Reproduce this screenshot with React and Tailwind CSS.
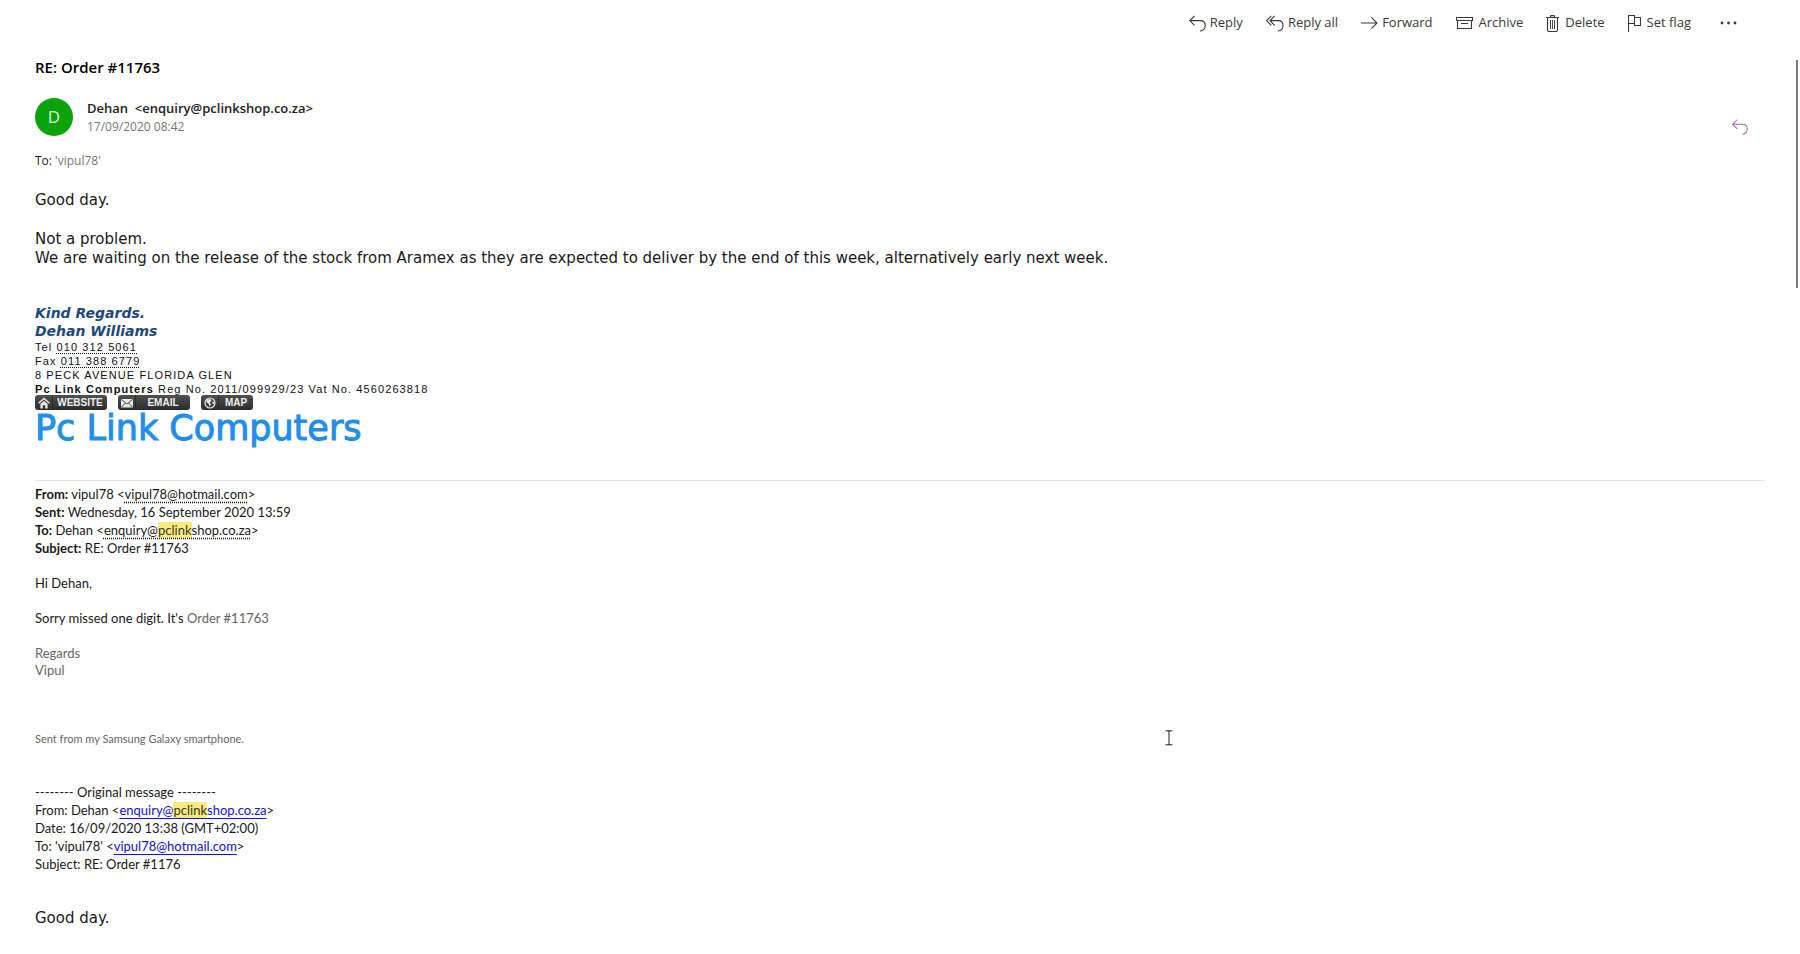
import React from 'react';

const SEGOE = "font-['Open_Sans','Noto_Sans',sans-serif]";
const CALIBRI = "font-['Lato','Open_Sans',sans-serif]";
const VERDANA = "font-['DejaVu_Sans',sans-serif]";
const ARIAL = "font-['Liberation_Sans',sans-serif]";

const ReplyIcon = ({ className = 'w-[17px] h-[17px]' }) => (
  <svg viewBox="0 0 17 17" className={className} fill="none" stroke="currentColor" strokeWidth="1.1">
    <path d="M5.5 .8 .8 5.6l4.7 4.8M.8 5.6h10.4c3.2 0 5 2.2 5 5s-2 5.2-5.2 5.4" />
  </svg>
);

const ReplyAllIcon = () => (
  <svg viewBox="0 0 18 17" className="w-[18px] h-[17px]" fill="none" stroke="currentColor" strokeWidth="1.1">
    <path d="M5.2 .8.6 5.6l4.6 4.8M8.6 .8 4 5.6l4.6 4.8M4 5.6h8c3.2 0 5 2.2 5 5s-2 5.2-5.2 5.4" />
  </svg>
);

const ForwardIcon = () => (
  <svg viewBox="0 0 17 17" className="w-[17px] h-[17px]" fill="none" stroke="currentColor" strokeWidth="1.1">
    <path d="M0 8h16M10.4 2.4 16 8l-5.6 5.6" />
  </svg>
);

const ArchiveIcon = () => (
  <svg viewBox="0 0 17 17" className="w-[17px] h-[17px]" fill="none" stroke="currentColor" strokeWidth="1.1">
    <path d="M.5 2.5h16v3H.5zM1.5 5.5v8h14v-8M5 8.5h7" />
  </svg>
);

const DeleteIcon = () => (
  <svg viewBox="0 0 13 17" className="w-[13px] h-[17px]" fill="none" stroke="currentColor" strokeWidth="1.1">
    <path d="M0 2.5h13M4.5 2.5V1.4c0-.5.3-.8.8-.8h2.4c.5 0 .8.3.8.8v1.1M1.5 2.5v12.6c0 .9.4 1.4 1.2 1.4h7.6c.8 0 1.2-.5 1.2-1.4V2.5" />
    <path d="M4.5 5v9M6.5 5v9M8.5 5v9" strokeWidth=".9" />
  </svg>
);

const FlagIcon = () => (
  <svg viewBox="0 0 13 17" className="w-[13px] h-[17px]" fill="none" stroke="currentColor" strokeWidth="1.1">
    <path d="M.5 17V.5h6v8h-6M6.5 2.5h6v8h-6v-2" />
  </svg>
);

const ACTIONS = [
  { label: 'Reply', Icon: ReplyIcon, gap: 'gap-1' },
  { label: 'Reply all', Icon: ReplyAllIcon, gap: 'gap-1' },
  { label: 'Forward', Icon: ForwardIcon, gap: 'gap-1' },
  { label: 'Archive', Icon: ArchiveIcon, gap: 'gap-[6px]' },
  { label: 'Delete', Icon: DeleteIcon, gap: 'gap-[6px]' },
  { label: 'Set flag', Icon: FlagIcon, gap: 'gap-[6px]' },
];

function Toolbar() {
  return (
    <header className="flex h-[46px] items-center justify-end gap-[23px] pr-[63px] text-[13px] text-[#3a3a3a]">
      {ACTIONS.map(({ label, Icon, gap }) => (
        <button key={label} className={`flex items-center ${gap}`}>
          <Icon />
          <span>{label}</span>
        </button>
      ))}
      <button aria-label="More actions" className="ml-[6px] flex items-center">
        <svg viewBox="0 0 17 4" className="w-[17px] h-1" fill="currentColor">
          <circle cx="2" cy="2" r="1.4" />
          <circle cx="8.5" cy="2" r="1.4" />
          <circle cx="15" cy="2" r="1.4" />
        </svg>
      </button>
    </header>
  );
}

const HomeGlyph = () => (
  <svg viewBox="0 0 12 12" className="w-3 h-3" fill="none" stroke="#e8e8e8" strokeWidth="1.5">
    <path d="M.6 6.2 6 1.4l5.4 4.8" />
    <path d="M2.4 7 6 3.9 9.6 7v4.4H7.2V8.2H4.8v3.2H2.4z" fill="#e8e8e8" stroke="none" />
  </svg>
);

const MailGlyph = () => (
  <svg viewBox="0 0 12 12" className="w-3 h-3" stroke="#3a3a3a" strokeWidth=".9">
    <rect x="0" y="2" width="12" height="8.5" fill="#e8e8e8" stroke="none" />
    <path d="M.4 2.4 6 7l5.6-4.6M.4 10.2 4.4 6M11.6 10.2 7.6 6" fill="none" />
  </svg>
);

const GlobeGlyph = () => (
  <svg viewBox="0 0 12 12" className="w-3 h-3">
    <circle cx="6" cy="6" r="5" fill="none" stroke="#e8e8e8" strokeWidth="1.2" />
    <path d="M3 2.6 6.6 2l.8 1.8-1.6 1.6L7 7.2 5.6 9.8 4.4 6.6 2.4 5.4zM8.6 4.4l1.6.8-.4 2.4-1.4-.8z" fill="#e8e8e8" />
  </svg>
);

const BADGES = [
  { label: 'WEBSITE', Glyph: HomeGlyph, size: 'w-[72px]' },
  { label: 'EMAIL', Glyph: MailGlyph, size: 'w-[72px]' },
  { label: 'MAP', Glyph: GlobeGlyph, size: 'w-[52px]' },
];

function Signature() {
  return (
    <div>
      <div className={`${VERDANA} pt-9 text-[14px] font-bold italic leading-[18px] text-[#1f497d]`}>
        <p>Kind Regards.</p>
        <p>Dehan Williams</p>
      </div>
      <div className={`${ARIAL} text-[11px] leading-[14px] tracking-widest text-[#111]`}>
        <p>Tel <a href="tel:0103125061" className="underline decoration-dotted underline-offset-2">010 312 5061</a></p>
        <p>Fax <a href="tel:0113886779" className="underline decoration-dotted underline-offset-2">011 388 6779</a></p>
        <p>8 PECK AVENUE FLORIDA GLEN</p>
        <p><b>Pc Link Computers</b> Reg No. 2011/099929/23 Vat No. 4560263818</p>
      </div>
      <div className={`${ARIAL} -mt-px mb-px flex gap-[11px] text-[10px] font-bold leading-[15px] text-[#eee]`}>
        {BADGES.map(({ label, Glyph, size }) => (
          <a key={label} href="#" className={`flex h-[15px] ${size} items-center rounded-[3px] bg-linear-to-b from-[#505050] to-[#2c2c2c] pl-[3px]`}>
            <Glyph />
            <span className="ml-[2px] flex-1 border-l border-[#2a2a2a] text-center">{label}</span>
          </a>
        ))}
      </div>
      <p className={`${VERDANA} text-[35px] leading-[35px] text-[#1e8fee] [-webkit-text-stroke:1px_#1e8fee]`}>Pc Link Computers</p>
    </div>
  );
}

const Mark = ({ children }) => <mark className="bg-[#fbe983] text-[#3a3a1a]">{children}</mark>;

const dotted = 'underline decoration-dotted underline-offset-[3px]';
const link = 'text-[#1212d8] underline underline-offset-[3px]';

function QuotedMessage() {
  return (
    <section className={`${CALIBRI} mt-[34px] border-t border-[#e3e3e3] pt-1 text-[13px] leading-[18px] text-[#1a1a1a]`}>
      <p><b>From:</b> vipul78 &lt;<a href="#" className={dotted}>vipul78@hotmail.com</a>&gt;</p>
      <p><b>Sent:</b> Wednesday, 16 September 2020 13:59</p>
      <p><b>To:</b> Dehan &lt;<a href="#" className={dotted}>enquiry@<Mark>pclink</Mark>shop.co.za</a>&gt;</p>
      <p><b>Subject:</b> RE: Order #11763</p>
      <p className="mt-[17px]">Hi Dehan,</p>
      <p className="mt-[17px]">Sorry missed one digit. It's <span className="text-[#666]">Order #11763</span></p>
      <p className="mt-[18px] leading-[17px] text-[#666]">Regards<br />Vipul</p>
      <p className="mt-[51px] text-[11px] text-[#666]">Sent from my Samsung Galaxy smartphone.</p>
      <div className="mt-[35px]">
        <p>-------- Original message --------</p>
        <p>From: Dehan &lt;<a href="#" className={link}>enquiry@<Mark>pclink</Mark>shop.co.za</a>&gt;</p>
        <p>Date: 16/09/2020 13:38 (GMT+02:00)</p>
        <p>To: 'vipul78' &lt;<a href="#" className={link}>vipul78@hotmail.com</a>&gt;</p>
        <p>Subject: RE: Order #1176</p>
      </div>
      <p className={`${VERDANA} mt-9 text-[15px]`}>Good day.</p>
    </section>
  );
}

export default function App() {
  return (
    <div className={`${SEGOE} relative min-h-screen bg-white text-[#1a1a1a]`}>
      <Toolbar />
      <main className="px-[35px] pt-[9px]">
        <h1 className="text-[15px] font-semibold leading-6 text-black">RE: Order #11763</h1>
        <div className="mt-[19px] flex items-center">
          <div className="flex h-[38px] w-[38px] items-center justify-center rounded-full bg-[#0aa30a] text-[17px] text-[#d8f5d8]">D</div>
          <div className="ml-[14px] flex-1">
            <p className="text-[13px] font-semibold leading-[19px] text-[#222]">Dehan &nbsp;&lt;enquiry@pclinkshop.co.za&gt;</p>
            <p className="text-[12px] leading-[18px] text-[#777]">17/09/2020 08:42</p>
          </div>
          <button aria-label="Replied" className="mr-[17px] mt-5 text-[#a860ae]">
            <ReplyIcon className="h-4 w-4" />
          </button>
        </div>
        <p className="mt-4 text-[12px] leading-[18px]">To: <span className="text-[#777]">'vipul78'</span></p>

        <article className={`${VERDANA} mt-[21px] text-[15px] leading-[19px]`}>
          <p>Good day.</p>
          <p className="mt-5">Not a problem.</p>
          <p>We are waiting on the release of the stock from Aramex as they are expected to deliver by the end of this week, alternatively early next week.</p>
        </article>

        <Signature />
        <QuotedMessage />
      </main>

      {/* scroll thumb */}
      <div className="absolute right-[2px] top-[60px] h-[228px] w-[2px] bg-[#7a7a7a]" />

      {/* text cursor */}
      <svg viewBox="0 0 8 16" className="absolute left-[1165px] top-[730px] h-4 w-2" fill="none" stroke="#222">
        <path d="M.5 .8h7M.5 14.8h7M4 .8v14" />
      </svg>
    </div>
  );
}
